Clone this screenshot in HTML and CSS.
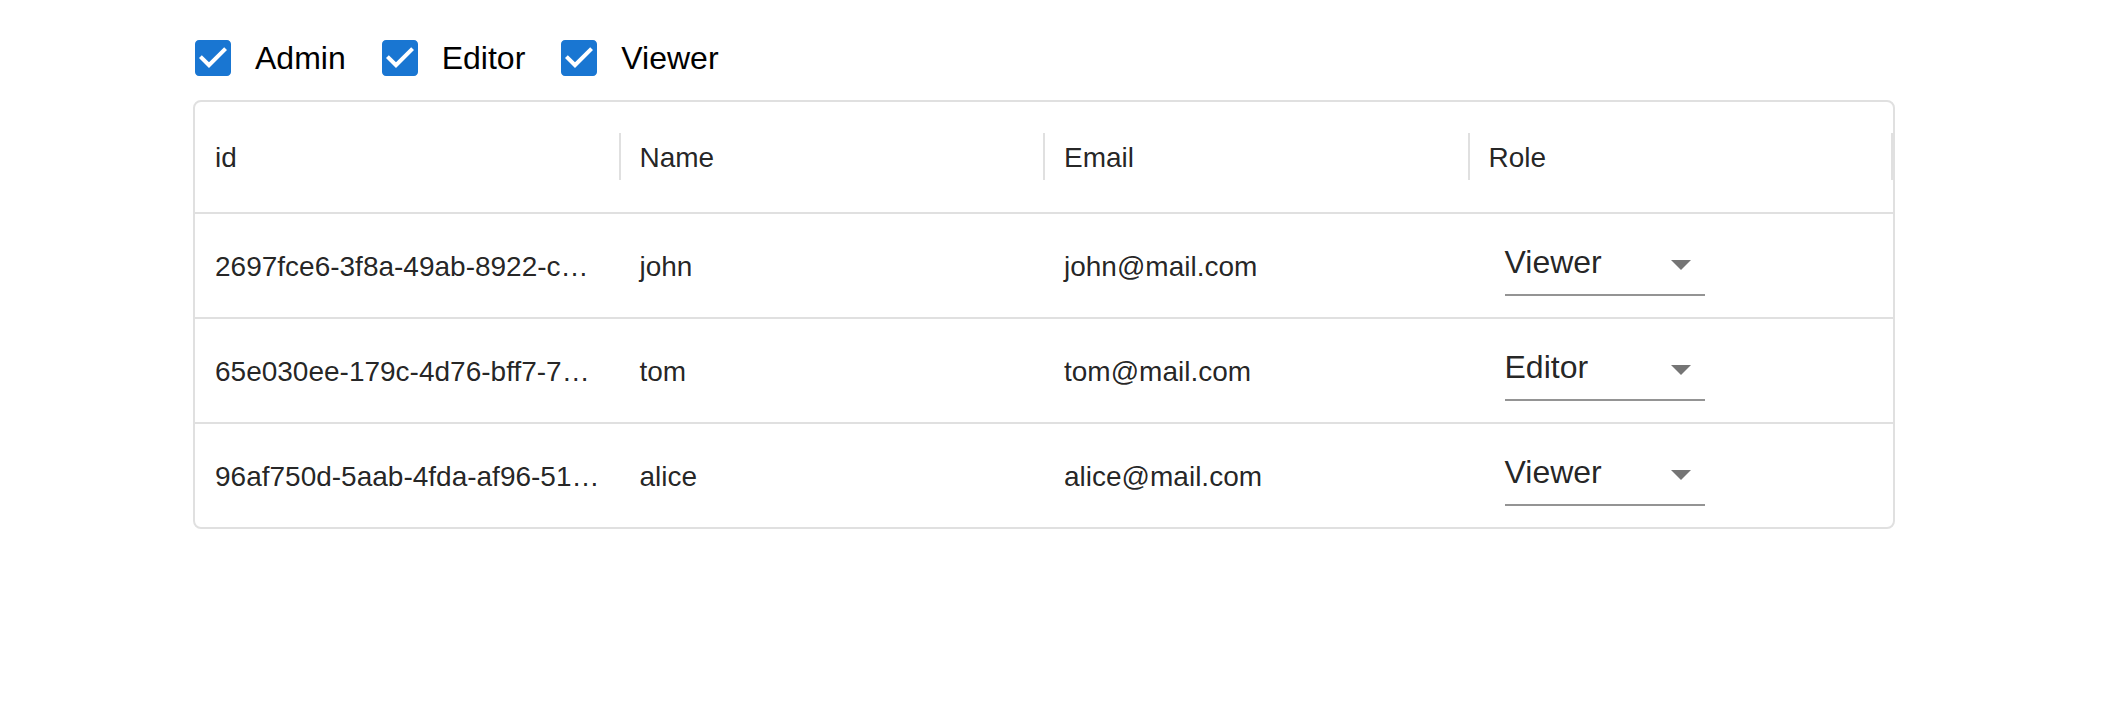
FILE: index.html
```html
<!DOCTYPE html>
<html lang="en">
<head>
<meta charset="utf-8">
<title>Users</title>
<link rel="stylesheet" href="styles.css">
</head>
<body>
<div class="page">
  <div class="roles">
    <label class="role-option">
      <span class="checkbox">
        <svg viewBox="0 0 24 24" width="48" height="48"><path d="M19 3H5c-1.11 0-2 .9-2 2v14c0 1.1.89 2 2 2h14c1.1 0 2-.9 2-2V5c0-1.1-.89-2-2-2zm-9 14l-5-5 1.41-1.41L10 14.17l7.59-7.59L19 8l-9 9z"/></svg>
      </span>
      <span class="role-label">Admin</span>
    </label>
    <label class="role-option">
      <span class="checkbox">
        <svg viewBox="0 0 24 24" width="48" height="48"><path d="M19 3H5c-1.11 0-2 .9-2 2v14c0 1.1.89 2 2 2h14c1.1 0 2-.9 2-2V5c0-1.1-.89-2-2-2zm-9 14l-5-5 1.41-1.41L10 14.17l7.59-7.59L19 8l-9 9z"/></svg>
      </span>
      <span class="role-label">Editor</span>
    </label>
    <label class="role-option">
      <span class="checkbox">
        <svg viewBox="0 0 24 24" width="48" height="48"><path d="M19 3H5c-1.11 0-2 .9-2 2v14c0 1.1.89 2 2 2h14c1.1 0 2-.9 2-2V5c0-1.1-.89-2-2-2zm-9 14l-5-5 1.41-1.41L10 14.17l7.59-7.59L19 8l-9 9z"/></svg>
      </span>
      <span class="role-label">Viewer</span>
    </label>
  </div>

  <div class="grid">
    <div class="row head">
      <div class="th">id</div>
      <div class="th">Name</div>
      <div class="th">Email</div>
      <div class="th last">Role</div>
    </div>
    <div class="row">
      <div class="td" title="2697fce6-3f8a-49ab-8922-c3b1e5f0a7d2">2697fce6-3f8a-49ab-8922-c…</div>
      <div class="td">john</div>
      <div class="td">john@mail.com</div>
      <div class="td">
        <div class="select"><span class="select-value">Viewer</span><svg class="select-icon" viewBox="0 0 24 24" width="48" height="48"><path d="M7 10l5 5 5-5z"/></svg></div>
      </div>
    </div>
    <div class="row">
      <div class="td" title="65e030ee-179c-4d76-bff7-7a2e4c9d1b60">65e030ee-179c-4d76-bff7-7…</div>
      <div class="td">tom</div>
      <div class="td">tom@mail.com</div>
      <div class="td">
        <div class="select"><span class="select-value">Editor</span><svg class="select-icon" viewBox="0 0 24 24" width="48" height="48"><path d="M7 10l5 5 5-5z"/></svg></div>
      </div>
    </div>
    <div class="row">
      <div class="td" title="96af750d-5aab-4fda-af96-5184c2e7d03a">96af750d-5aab-4fda-af96-51…</div>
      <div class="td">alice</div>
      <div class="td">alice@mail.com</div>
      <div class="td">
        <div class="select"><span class="select-value">Viewer</span><svg class="select-icon" viewBox="0 0 24 24" width="48" height="48"><path d="M7 10l5 5 5-5z"/></svg></div>
      </div>
    </div>
  </div>
</div>
</body>
</html>
```

FILE: styles.css
```css
* {
  box-sizing: border-box;
}

html, body {
  margin: 0;
  padding: 0;
  background: #ffffff;
}

body {
  font-family: "Liberation Sans", Arial, Helvetica, sans-serif;
  color: #000000;
}

.page {
  padding: 16px 0 0 193px;
  width: 1895px;
}

.roles {
  display: flex;
  align-items: center;
  height: 84px;
}

.role-option {
  display: inline-flex;
  align-items: center;
  margin-left: -22px;
  margin-right: 34px;
  cursor: pointer;
}

.checkbox {
  display: inline-flex;
  padding: 18px;
  width: 84px;
  height: 84px;
}

.checkbox svg {
  fill: #1976d2;
  display: block;
}

.role-label {
  font-size: 32px;
  line-height: 1.5;
  color: #000000;
}

.grid {
  width: 1702px;
  border: 2px solid #e0e0e0;
  border-radius: 8px;
  font-size: 28px;
  color: rgba(0, 0, 0, 0.87);
}

.row {
  display: grid;
  grid-template-columns: repeat(4, 1fr);
  height: 105px;
  border-bottom: 2px solid #e0e0e0;
}

.row:last-child {
  border-bottom: none;
  height: 103px;
}

.row.head {
  height: 112px;
}

.th,
.td {
  display: flex;
  align-items: center;
  padding: 0 20px;
  min-width: 0;
  overflow: hidden;
}

.th {
  position: relative;
  overflow: visible;
  font-weight: 500;
  padding-top: 2px;
}

.th::after {
  content: "";
  position: absolute;
  top: 31px;
  right: -1px;
  width: 2px;
  height: 47px;
  background: #e0e0e0;
}

.th.last::after {
  right: 0;
}

.td {
  white-space: nowrap;
  text-overflow: ellipsis;
  display: block;
  padding-top: 2px;
  line-height: 102px;
}

.td:last-child {
  display: flex;
  align-items: center;
  overflow: visible;
  padding-top: 0;
}

.select {
  position: relative;
  margin-left: 16px;
  margin-bottom: 2px;
  width: 200px;
  height: 62px;
  padding: 5px 0 11px;
  border-bottom: 2px solid rgba(0, 0, 0, 0.42);
  font-size: 32px;
  line-height: 46px;
  color: rgba(0, 0, 0, 0.87);
}

.select-value {
  display: block;
}

.select-icon {
  position: absolute;
  right: 0;
  top: 6px;
  fill: rgba(0, 0, 0, 0.54);
}
```
